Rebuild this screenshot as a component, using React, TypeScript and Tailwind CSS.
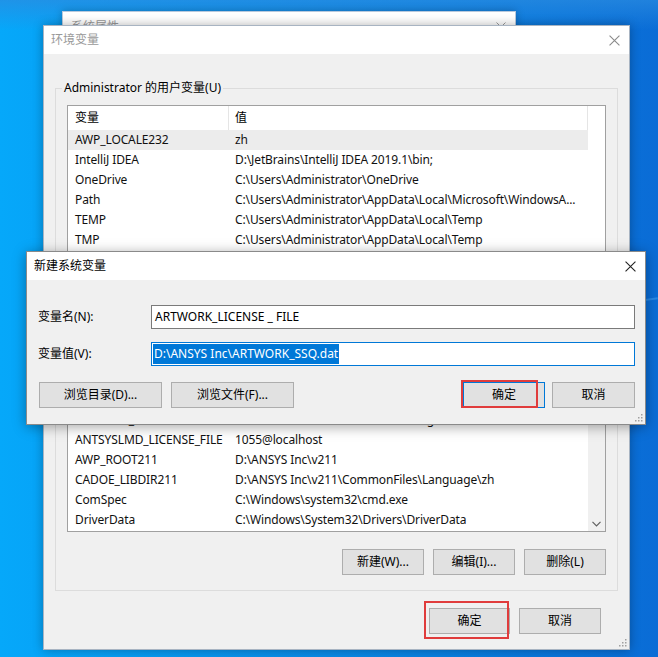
import React from "react";

const FONT = "font-['Noto_Sans','Noto_Sans_CJK_SC',sans-serif]";

const userRows: [string, string][] = [
  ["AWP_LOCALE232", "zh"],
  ["IntelliJ IDEA", "D:\\JetBrains\\IntelliJ IDEA 2019.1\\bin;"],
  ["OneDrive", "C:\\Users\\Administrator\\OneDrive"],
  ["Path", "C:\\Users\\Administrator\\AppData\\Local\\Microsoft\\WindowsA..."],
  ["TEMP", "C:\\Users\\Administrator\\AppData\\Local\\Temp"],
  ["TMP", "C:\\Users\\Administrator\\AppData\\Local\\Temp"],
];

const sysRows: [string, string][] = [
  ["", ""],
  ["", ""],
  ["", ""],
  ["ANSYSLIC_DIR", "D:\\ANSYS Inc\\Shared Files\\Licensing"],
  ["ANTSYSLMD_LICENSE_FILE", "1055@localhost"],
  ["AWP_ROOT211", "D:\\ANSYS Inc\\v211"],
  ["CADOE_LIBDIR211", "D:\\ANSYS Inc\\v211\\CommonFiles\\Language\\zh"],
  ["ComSpec", "C:\\Windows\\system32\\cmd.exe"],
  ["DriverData", "C:\\Windows\\System32\\Drivers\\DriverData"],
];

function CloseX({ color, size = 10 }: { color: string; size?: number }) {
  return (
    <svg width={size} height={size} viewBox="0 0 10 10">
      <path d="M0.5 0.5 L9.5 9.5 M9.5 0.5 L0.5 9.5" stroke={color} strokeWidth="1" fill="none" />
    </svg>
  );
}

function Grip() {
  return (
    <svg width="10" height="10" viewBox="0 0 10 10" className="absolute right-[2px] bottom-[2px]">
      {[
        [8, 2],
        [8, 5],
        [5, 5],
        [8, 8],
        [5, 8],
        [2, 8],
      ].map(([x, y], i) => (
        <rect key={i} x={x} y={y} width="1.5" height="1.5" fill="#a0a0a0" />
      ))}
    </svg>
  );
}

function Btn({ children, className }: { children: React.ReactNode; className: string }) {
  return (
    <div
      className={`h-[26px] flex items-center justify-center bg-[#e1e1e1] border text-[12px] text-black ${className}`}
    >
      {children}
    </div>
  );
}

function Row({ name, value, selected }: { name: string; value: string; selected?: boolean }) {
  return (
    <div
      className={`h-[20px] shrink-0 flex items-center text-[12px] tracking-[-0.12px] text-[#111] ${selected ? "bg-[#ececec] w-[520px]" : ""}`}
    >
      <div className="w-[161px] pl-[7px] whitespace-nowrap overflow-hidden">{name}</div>
      <div className="flex-1 pl-[6px] whitespace-nowrap overflow-hidden">{value}</div>
    </div>
  );
}

export default function App() {
  return (
    <div
      className={`relative w-[658px] h-[657px] overflow-hidden bg-gradient-to-r from-[#06a8fa] via-[#0a8ae6] to-[#0a6cd6] ${FONT}`}
    >
      {/* light streaks on desktop */}
      <div className="absolute left-0 top-0 w-[658px] h-[30px] bg-gradient-to-b from-[#2a8be0] to-transparent opacity-70" />
      <div className="absolute right-0 top-[300px] w-[40px] h-[2px] bg-[#3d9cf0] opacity-60 rotate-[-8deg]" />

      {/* back window: 系统属性 */}
      <div className="absolute left-[62px] top-[11px] w-[454px] h-[120px] bg-white border border-[#b9c9dc] shadow-[0_0_8px_rgba(0,0,0,0.25)]">
        <div className="h-[28px] flex items-center justify-between pl-[8px] pr-[9px] pt-[2px] text-[12px] text-[#999]">
          <span>系统属性</span>
          <CloseX color="#9a9a9a" />
        </div>
      </div>

      {/* env window */}
      <div className="absolute left-[43px] top-[25px] w-[587px] h-[625px] bg-[#f0f0f0] border border-[#a8b4c2] shadow-[0_0_10px_rgba(0,0,0,0.3)] flex flex-col">
        <div className="h-[28px] bg-white flex items-center justify-between pl-[7px] pr-[9px] text-[12px] text-[#999] shrink-0">
          <span>环境变量</span>
          <CloseX color="#8a8a8a" size={11} />
        </div>
        <div className="flex-1 relative px-[11px] flex flex-col">
          {/* group 1 */}
          <div className="relative mt-[34px] border border-[#dcdcdc] h-[210px] pt-[16px] px-[11px]">
            <div className="absolute -top-[9px] left-[6px] px-[2px] bg-[#f0f0f0] text-[12px] text-black leading-[16px]">
              Administrator 的用户变量(U)
            </div>
            <div className="w-[539px] h-[180px] bg-white border border-[#a0a0a0] overflow-hidden">
              <div className="h-[24px] flex items-center text-[12px] text-black">
                <div className="w-[161px] h-full pl-[7px] flex items-center border-r border-[#e5e5e5]">变量</div>
                <div className="w-[359px] h-full pl-[6px] flex items-center border-r border-[#e5e5e5]">值</div>
              </div>
              {userRows.map(([n, v], i) => (
                <Row key={n} name={n} value={v} selected={i === 0} />
              ))}
            </div>
          </div>
          {/* group 2 */}
          <div className="relative mt-[10px] border border-[#dcdcdc] h-[283px] pt-[16px] px-[11px] flex flex-col">
            <div className="w-[539px] h-[207px] bg-white border border-[#a0a0a0] overflow-hidden flex">
              <div className="w-[520px] flex flex-col">
                <div className="h-[24px] shrink-0" />
                {sysRows.map(([n, v], i) => (
                  <Row key={i} name={n} value={v} />
                ))}
              </div>
              <div className="w-[17px] bg-[#f0f0f0] flex flex-col justify-end items-center pb-[4px]">
                <svg width="9" height="6" viewBox="0 0 9 6">
                  <path d="M0.5 0.8 L4.5 4.8 L8.5 0.8" stroke="#606060" strokeWidth="1.2" fill="none" />
                </svg>
              </div>
            </div>
            <div className="mt-[17px] flex justify-end gap-[9px]">
              <Btn className="w-[82px] border-[#adadad]">新建(W)...</Btn>
              <Btn className="w-[82px] border-[#adadad]">编辑(I)...</Btn>
              <Btn className="w-[82px] border-[#adadad]">删除(L)</Btn>
            </div>
          </div>
          {/* bottom buttons */}
          <div className="mt-[17px] flex justify-end gap-[9px] pr-[17px]">
            <Btn className="w-[81px] border-[#adadad]">确定</Btn>
            <Btn className="w-[82px] border-[#adadad]">取消</Btn>
          </div>
        </div>
        <Grip />
      </div>

      {/* red annotation, bottom */}
      <div className="absolute left-[424px] top-[601px] w-[85px] h-[38px] border-2 border-[#e03c3c]" />

      {/* front dialog: 新建系统变量 */}
      <div className="absolute left-[26px] top-[251px] w-[620px] h-[174px] bg-[#f0f0f0] border border-[#8a8a8a] shadow-[0_2px_12px_rgba(0,0,0,0.35)] flex flex-col">
        <div className="h-[28px] bg-white flex items-center justify-between pl-[7px] pr-[9px] text-[12px] text-black shrink-0">
          <span>新建系统变量</span>
          <CloseX color="#222" size={11} />
        </div>
        <div className="flex-1 relative pl-[11px] pr-[10px] flex flex-col">
          <div className="mt-[25px] flex items-center">
            <div className="w-[113px] text-[12px] text-black">变量名(N):</div>
            <div className="w-[484px] h-[24px] bg-white border border-[#7a7a7a] flex items-center pl-[3px] text-[12px] text-black">
              ARTWORK_LICENSE _ FILE
            </div>
          </div>
          <div className="mt-[13px] flex items-center">
            <div className="w-[113px] text-[12px] text-black">变量值(V):</div>
            <div className="w-[484px] h-[24px] bg-white border border-[#0078d7] flex items-center pl-[1px] text-[12px]">
              <span className="bg-[#0078d7] text-white px-[1px] leading-[20px]">D:\ANSYS Inc\ARTWORK_SSQ.dat</span>
            </div>
          </div>
          <div className="mt-[16px] flex items-center">
            <Btn className="w-[123px] ml-[1px] border-[#adadad]">浏览目录(D)...</Btn>
            <Btn className="w-[123px] ml-[9px] border-[#adadad]">浏览文件(F)...</Btn>
            <div className="flex-1" />
            <Btn className="w-[82px] border-[#0078d7]">确定</Btn>
            <Btn className="w-[83px] ml-[7px] border-[#adadad]">取消</Btn>
          </div>
        </div>
        <Grip />
      </div>

      {/* red annotation, dialog */}
      <div className="absolute left-[461px] top-[380px] w-[77px] h-[28px] border-2 border-[#e03c3c]" />
    </div>
  );
}
